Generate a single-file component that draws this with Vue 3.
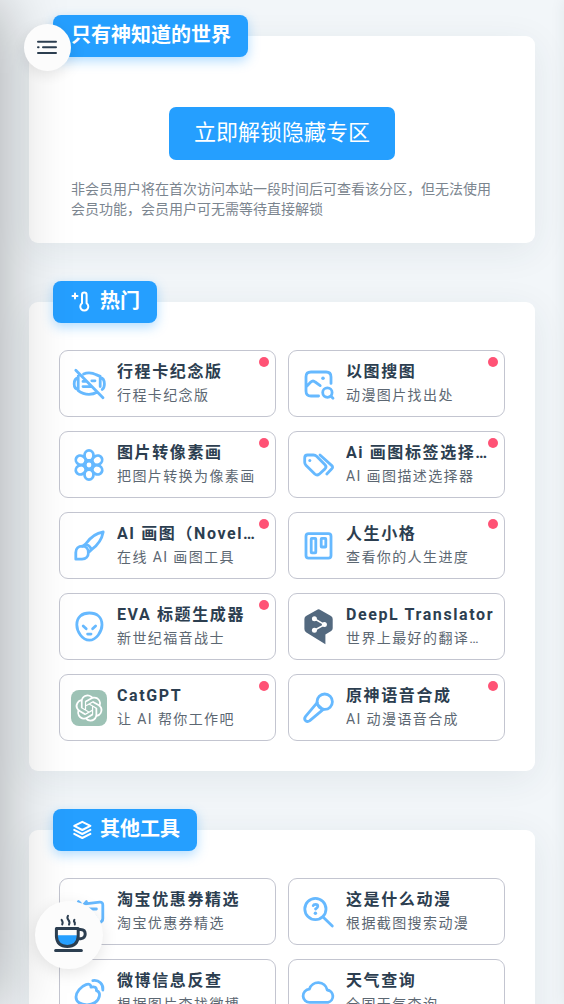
<script setup>
const openai = 'M22.2819 9.8211a5.9847 5.9847 0 0 0-.5157-4.9108 6.0462 6.0462 0 0 0-6.5098-2.9A6.0651 6.0651 0 0 0 4.9807 4.1818a5.9847 5.9847 0 0 0-3.9977 2.9 6.0462 6.0462 0 0 0 .7427 7.0966 5.98 5.98 0 0 0 .511 4.9107 6.051 6.051 0 0 0 6.5146 2.9001A5.9847 5.9847 0 0 0 13.2599 24a6.0557 6.0557 0 0 0 5.7718-4.2058 5.9894 5.9894 0 0 0 3.9977-2.9001 6.0557 6.0557 0 0 0-.7475-7.0729zm-9.022 12.6081a4.4755 4.4755 0 0 1-2.8764-1.0408l.1419-.0804 4.7783-2.7582a.7948.7948 0 0 0 .3927-.6813v-6.7369l2.02 1.1686a.071.071 0 0 1 .038.052v5.5826a4.504 4.504 0 0 1-4.4945 4.4944zm-9.6607-4.1254a4.4708 4.4708 0 0 1-.5346-3.0137l.142.0852 4.783 2.7582a.7712.7712 0 0 0 .7806 0l5.8428-3.3685v2.3324a.0804.0804 0 0 1-.0332.0615L9.74 19.9502a4.4992 4.4992 0 0 1-6.1408-1.6464zM2.3408 7.8956a4.485 4.485 0 0 1 2.3655-1.9728V11.6a.7664.7664 0 0 0 .3879.6765l5.8144 3.3543-2.0201 1.1685a.0757.0757 0 0 1-.071 0l-4.8303-2.7865A4.504 4.504 0 0 1 2.3408 7.872zm16.5963 3.8558L13.1038 8.364 15.1192 7.2a.0757.0757 0 0 1 .071 0l4.8303 2.7913a4.4944 4.4944 0 0 1-.6765 8.1042v-5.6772a.79.79 0 0 0-.407-.667zm2.0107-3.0231l-.142-.0852-4.7735-2.7818a.7759.7759 0 0 0-.7854 0L9.409 9.2297V6.8974a.0662.0662 0 0 1 .0284-.0615l4.8303-2.7866a4.4992 4.4992 0 0 1 6.6802 4.66zM8.3065 12.863l-2.02-1.1638a.0804.0804 0 0 1-.038-.0567V6.0742a4.4992 4.4992 0 0 1 7.3757-3.4537l-.142.0805L8.704 5.459a.7948.7948 0 0 0-.3927.6813zm1.0976-2.3654l2.602-1.4998 2.6069 1.4998v2.9994l-2.5974 1.4997-2.6067-1.4997Z'

const petals = [0, 60, 120, 180, 240, 300]
  .map((a) => `<ellipse cx="18" cy="8.4" rx="4.5" ry="5" transform="rotate(${a} 18 18)"/>`)
  .join('')

const icons = {
  mask: '<path d="M4.8 4.2 32 31.8M7.2 10.2V24.6Q12 28.3 18 28.3 22.6 28.3 26.2 26M12.6 8Q15 6.8 18 6.8 22 6.8 25 8.6L29.2 10.4V20.6M29.4 11.6C32 12 33.4 14.4 33.4 18 33.4 20.4 32.6 22.4 31.2 23.4M7 12C4.4 12.4 3.2 15 3.2 18S4.4 23 7 23.6M20.8 14.8H24M12 15.4H14M12 20.6H19.6"/>',
  imageSearch: '<path d="M18.6 30H11Q6 30 6 25V11Q6 6 11 6H26.2Q31 6 31 11V17.4M6 21 10.8 16Q13 13.8 15.2 16L20.2 19.6"/><circle cx="27.4" cy="26.6" r="4.7"/><path d="M31 30.2 33 32.2"/><circle class="solid" cx="23" cy="12.2" r="1.8"/>',
  flower: petals + '<circle cx="18" cy="18" r="3.8"/>',
  tags: '<path d="M7.5 8H13.5Q15.3 8 16.6 9.3L25 17.7Q27 19.8 25 21.9L19.2 27.2Q17 29 14.8 27L5.9 18.2Q4.7 17 4.7 15.2V11Q4.7 8 7.5 8ZM20 8 31.8 18.6Q33.4 20.2 31.8 21.8L26.8 27"/><circle class="solid" cx="9.8" cy="13.4" r="1.5"/>',
  brush: '<path d="M14.8 15.8Q22 5.6 32.2 4 30.2 14.6 20.8 21.4M14.8 15.8 11.8 18.4M20.8 21.4 17.2 24.6M15 16Q18.6 17.6 20.6 21.2M4.8 31.2V24.4C4.8 20.4 7.6 18.2 11.2 18.2 14.8 18.2 17.4 21 17.4 24.6 17.4 28.4 14.8 31.2 11 31.2Z"/>',
  board: '<rect x="6" y="5.6" width="25" height="24.6" rx="2.6"/><rect x="11.2" y="10.4" width="4.6" height="14.4" rx=".6"/><rect x="21.2" y="10.4" width="4.6" height="8.6" rx=".6"/>',
  alien: '<path d="M18.3 4C25.6 4 31 8 31 15.8 31 22.4 25.4 31.2 18.3 31.2S5.8 22.4 5.8 15.8C5.8 8 11 4 18.3 4ZM12.2 17 15.2 19.8M24.6 17 21.6 19.8M16.6 25.1H20"/>',
  deepl: '<path class="slate" d="M16.8.9Q18.6-.2 20.4.9L31 6.9Q32.7 8 32.7 10V19.2Q32.7 21 31.2 22L25.4 25.6V35.2L6 23.2Q4.4 22 4.4 20V10Q4.4 8 6 7Z"/><path class="link" d="M14.4 9.8 24.6 15.6 14.4 21.2"/><circle class="white" cx="14.4" cy="9.8" r="2.5"/><circle class="white" cx="24.4" cy="15.6" r="2.5"/><circle class="white" cx="14.4" cy="21.2" r="2.5"/>',
  gpt: `<rect class="mint" width="36" height="36" rx="8"/><path class="white" transform="translate(4.6 4.6) scale(1.12)" d="${openai}"/>`,
  mic: '<circle cx="24.7" cy="11.7" r="7.7"/><path d="M17.2 12.6 5.6 26.4Q3.6 29 5.8 30.8 7.6 32.2 9.8 30.6L23.6 19.2M17.4 14.4 22 18.8"/>',
  shop: '<path d="M14 9.8 28.6 8.2Q31.8 8 31.8 11V24.6Q31.8 28 28.4 28.4H18M7.4 7.6 9.4 9.4M15.4 7.6 12.6 10.8M18 15H25.4M24 22 25.6 24.6"/>',
  searchHelp: '<circle cx="15.4" cy="15" r="10.6"/><path d="M23 23 32.3 32M13.2 11.6Q13.6 10.4 15.5 10.4 17.8 10.4 17.8 12.3 17.8 13.6 15.6 15"/><circle class="solid" cx="15.4" cy="19.3" r="1.7"/>',
  weibo: '<path d="M5 22C5 17 10 11.4 15 9.6 18 8.6 20 9.4 20 12.2 23 11.2 26 12 25.4 15.6 27.6 16.4 29 18.2 28.4 21 27.4 26.6 22 29.8 16 29.8 9.6 29.8 5 27 5 22ZM21.8 5.6C28 4.6 32.6 9.2 31.8 15"/>',
  cloud: '<path d="M10 27.4A6.6 6.6 0 0 1 9.4 14.2 9.2 9.2 0 0 1 27.2 15 6.3 6.3 0 0 1 28 27.4Z"/>',
}

const sections = [
  {
    title: '热门',
    glyph: '<path d="M3 2.4V7.4M.5 4.9H5.5M10 12.3V3.9a2.3 2.3 0 0 1 4.6 0V12.3a4 4 0 1 1-4.6 0Z"/>',
    tools: [
      { name: '行程卡纪念版', desc: '行程卡纪念版', icon: 'mask', hot: true },
      { name: '以图搜图', desc: '动漫图片找出处', icon: 'imageSearch', hot: true },
      { name: '图片转像素画', desc: '把图片转换为像素画', icon: 'flower', hot: true },
      { name: 'Ai 画图标签选择…', desc: 'AI 画图描述选择器', icon: 'tags', hot: true },
      { name: 'AI 画图（Novel…', desc: '在线 AI 画图工具', icon: 'brush', hot: true },
      { name: '人生小格', desc: '查看你的人生进度', icon: 'board', hot: true },
      { name: 'EVA 标题生成器', desc: '新世纪福音战士', icon: 'alien', hot: true },
      { name: 'DeepL Translator', desc: '世界上最好的翻译…', icon: 'deepl', hot: false },
      { name: 'CatGPT', desc: '让 AI 帮你工作吧', icon: 'gpt', hot: true },
      { name: '原神语音合成', desc: 'AI 动漫语音合成', icon: 'mic', hot: true },
    ],
  },
  {
    title: '其他工具',
    glyph: '<path d="M10.3 2.8 18.4 6.9 10.3 11 2.2 6.9ZM2.2 10.9 10.3 15 18.4 10.9M2.2 14.9 10.3 19 18.4 14.9"/>',
    tools: [
      { name: '淘宝优惠券精选', desc: '淘宝优惠券精选', icon: 'shop', hot: false },
      { name: '这是什么动漫', desc: '根据截图搜索动漫', icon: 'searchHelp', hot: false },
      { name: '微博信息反查', desc: '根据图片查找微博', icon: 'weibo', hot: false },
      { name: '天气查询', desc: '全国天气查询', icon: 'cloud', hot: false },
    ],
  },
]
</script>

<template>
  <div class="page">
    <main class="content">
      <section class="card unlock">
        <h2 class="tag">只有神知道的世界</h2>
        <button type="button" class="unlock-btn">立即解锁隐藏专区</button>
        <p class="note">非会员用户将在首次访问本站一段时间后可查看该分区，但无法使用会员功能，会员用户可无需等待直接解锁</p>
      </section>

      <section v-for="s in sections" :key="s.title" class="card">
        <h2 class="tag">
          <svg class="tag-icon" viewBox="0 0 20 20" aria-hidden="true" v-html="s.glyph"></svg>
          <span>{{ s.title }}</span>
        </h2>
        <div class="grid">
          <a v-for="t in s.tools" :key="t.name" href="#" class="tool">
            <svg class="tool-icon" viewBox="0 0 36 36" aria-hidden="true" v-html="icons[t.icon]"></svg>
            <span class="text">
              <strong class="name">{{ t.name }}</strong>
              <span class="desc">{{ t.desc }}</span>
            </span>
            <i v-if="t.hot" class="dot"></i>
          </a>
        </div>
      </section>
    </main>

    <div class="drawer-shade"></div>
    <div class="edge-shade"></div>

    <button type="button" class="fab menu" aria-label="菜单">
      <svg viewBox="0 0 22 22" width="22" height="22" aria-hidden="true">
        <path d="M2 5.7H20M7 11.3H20M2 11.3H2.6M2 17H20" />
      </svg>
    </button>
    <button type="button" class="fab coffee" aria-label="咖啡">
      <svg viewBox="0 0 36 42" width="36" height="42" aria-hidden="true">
        <path class="drink" d="M5 23.2H26V24Q25 34 15.6 34T5 24Z" />
        <path d="M4.4 16.4H26.2V24.4Q25.6 34.4 15.3 34.4T4.4 24.4ZM26.6 17.6H28.6Q33.2 17.8 33.2 22T28.6 26.8H26.2M3.6 38.4H29.4" />
        <path class="steam" d="M9.6 7.8Q11.4 10.2 10.2 12.4M16 3.8Q14.6 6 16.4 8T17 12.6M22.4 7.8Q21.4 9.4 22.8 10.6V12.4" />
      </svg>
    </button>
  </div>
</template>

<style>
body {
  background: #eff3f6;
}
</style>

<style scoped>
.page {
  height: 100vh;
  overflow: hidden auto;
  scrollbar-width: none;
  background: #f2f6f9;
  color: #2c3e50;
  font-family: Roboto, "Noto Sans CJK SC", sans-serif;
}
.content {
  display: flex;
  flex-direction: column;
  gap: 59px;
  padding: 36px 29px 59px;
}
.card {
  display: flex;
  flex-direction: column;
  align-items: flex-start;
  padding: 0 30px 30px;
  border-radius: 9px;
  background: #fff;
  box-shadow: 0 8px 36px rgba(44, 62, 80, 0.08);
}
.tag {
  display: flex;
  align-items: center;
  gap: 8px;
  height: 42px;
  margin: -21px 0 27px -6px;
  padding: 0 17px 2px 18px;
  box-sizing: border-box;
  border-radius: 8px;
  background: #259fff;
  box-shadow: 0 4px 12px rgba(37, 159, 255, 0.35);
  color: #fff;
  font-size: 20px;
  font-weight: 700;
  line-height: 30px;
}
.tag-icon {
  width: 20px;
  height: 20px;
  margin-left: 1px;
  overflow: visible;
  fill: none;
  stroke: #fff;
  stroke-width: 2;
  stroke-linecap: round;
  stroke-linejoin: round;
}
.unlock {
  padding: 0 42px 24px;
}
.unlock .tag {
  margin: -21px 0 50px -18px;
}
.unlock-btn {
  align-self: center;
  height: 53px;
  padding: 0 25px 2px;
  border: 0;
  border-radius: 7px;
  background: #259fff;
  color: #fff;
  font: 400 22px/32px Roboto, "Noto Sans CJK SC", sans-serif;
}
.note {
  margin: 19px 0 0;
  color: #7b858f;
  font-size: 14px;
  line-height: 20px;
}
.grid {
  display: grid;
  grid-template-columns: repeat(2, minmax(0, 1fr));
  gap: 14px 12px;
  width: 100%;
}
.tool {
  position: relative;
  display: flex;
  align-items: center;
  gap: 10px;
  min-width: 0;
  min-height: 48px;
  padding: 9px 8px 8px 11px;
  border: 1px solid #c3c5d0;
  border-radius: 9px;
  color: inherit;
  text-decoration: none;
}
.tool-icon {
  flex: none;
  width: 36px;
  height: 36px;
  overflow: visible;
  fill: none;
  stroke: #66b9ff;
  stroke-width: 2.8;
  stroke-linecap: round;
  stroke-linejoin: round;
}
.tool-icon :deep(.solid) {
  fill: #66b9ff;
  stroke: none;
}
.tool-icon :deep(.white) {
  fill: #fff;
  stroke: none;
}
.tool-icon :deep(.slate) {
  fill: #53697f;
  stroke: none;
}
.tool-icon :deep(.mint) {
  fill: #9dc2b5;
  stroke: none;
}
.tool-icon :deep(.link) {
  stroke: #fff;
  stroke-width: 1.6;
}
.text {
  display: flex;
  flex-direction: column;
  align-self: flex-start;
  min-width: 0;
}
.name,
.desc {
  overflow: hidden;
  letter-spacing: 0.1em;
  text-overflow: ellipsis;
  white-space: nowrap;
}
.name {
  font-size: 16px;
  line-height: 24px;
}
.desc {
  color: #5c6772;
  font-size: 14px;
  line-height: 22px;
}
.dot {
  position: absolute;
  top: 6px;
  right: 6px;
  width: 10px;
  height: 10px;
  border-radius: 50%;
  background: #ff5275;
}
.drawer-shade,
.edge-shade {
  position: fixed;
  top: 0;
  bottom: 0;
  width: 300px;
  pointer-events: none;
}
.drawer-shade {
  right: 100%;
  box-shadow: 0 0 64px rgba(0, 0, 0, 0.32);
}
.edge-shade {
  left: 100%;
  box-shadow: 0 0 14px rgba(44, 62, 80, 0.08);
}
.fab {
  position: fixed;
  display: grid;
  place-items: center;
  box-sizing: border-box;
  padding: 0;
  border: 0;
  border-radius: 50%;
  background: #fcfcfc;
  box-shadow: 0 4px 16px rgba(0, 0, 0, 0.1);
}
.fab svg {
  fill: none;
  stroke: #2c3e50;
  stroke-width: 2;
  stroke-linecap: round;
  stroke-linejoin: round;
}
.menu {
  top: 24px;
  left: 24px;
  width: 47px;
  height: 47px;
  padding: 0 2px 2px 0;
}
.coffee {
  bottom: 35px;
  left: 35px;
  width: 68px;
  height: 68px;
  padding: 0 0 4px 2px;
}
.coffee svg {
  stroke-width: 3;
}
.coffee .steam {
  stroke-width: 2;
}
.coffee .drink {
  fill: #259fff;
  stroke: none;
}
</style>
